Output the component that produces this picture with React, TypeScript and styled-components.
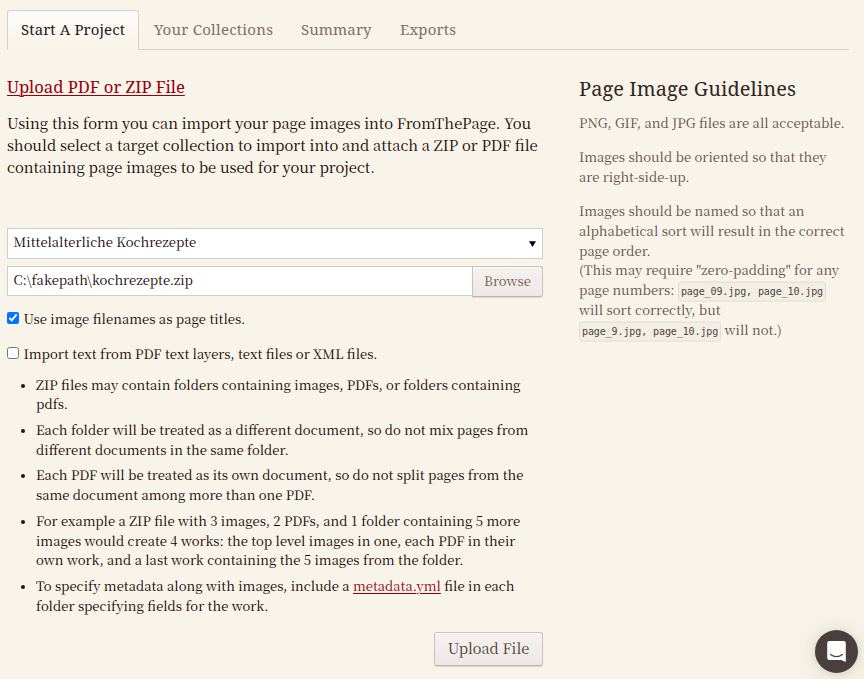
import React from "react";
import styled, { createGlobalStyle } from "styled-components";

const serif = '"Noto Serif CJK SC", "Source Serif Pro", "Liberation Serif", serif';
const slab = '"Noto Serif", "DejaVu Serif Condensed", "Liberation Serif", serif';

const GlobalStyle = createGlobalStyle`
  *, *::before, *::after { box-sizing: border-box; }
  html { background: #f9f4e9; }
  body {
    margin: 0;
    color: #140202;
    font: 400 13.15px/19.8px ${serif};
    overflow: hidden;
  }
`;

const Page = styled.div`
  height: 679px;
  padding: 10px 15px 0 7px;
`;

const Tabs = styled.nav`
  display: flex;
  height: 40px;
`;

const Tab = styled.a<{ $active?: boolean; $width: number; $spacing: number }>`
  width: ${(p) => p.$width}px;
  flex: none;
  padding-left: 15px;
  white-space: nowrap;
  font: 400 15px/38px ${slab};
  letter-spacing: ${(p) => p.$spacing}px;
  color: ${(p) => (p.$active ? "#271a1a" : "#7d706b")};
  border: 0 solid #d5d1c6;
  border-bottom-width: 1px;
  ${(p) =>
    p.$active &&
    `
    padding-left: 13px;
    line-height: 36px;
    border-width: 1px 1px 0;
    border-radius: 3px 3px 0 0;
    background: linear-gradient(#fefcf9, #f9f4e9);
  `}
`;

const TabRule = styled.div`
  flex: 1;
  border-bottom: 1px solid #d5d1c6;
`;

const Columns = styled.div`
  display: grid;
  grid-template-columns: 536px 1fr;
  column-gap: 36px;
`;

const Main = styled.main`
  padding-top: 25px;
`;

const UploadHeading = styled.h2`
  margin: 0;
  font: 400 16.7px/24px ${slab};
  letter-spacing: -0.05px;
`;

const Link = styled.a`
  color: #96000c;
  text-decoration: underline;
  text-underline-offset: 2px;
  text-decoration-thickness: 1px;
`;

const Intro = styled.p`
  margin: 13px 0 50px;
  font-size: 14.77px;
  line-height: 22px;
  white-space: nowrap;
`;

const SelectBox = styled.div`
  display: flex;
  align-items: center;
  justify-content: space-between;
  height: 31px;
  padding: 0 6px 3px 5.5px;
  background: #fff;
  border: 1px solid #d2cec4;
`;

const Caret = styled.svg`
  width: 7px;
  height: 6px;
  margin-top: 3px;
`;

const FileRow = styled.div`
  display: flex;
  margin-top: 7px;
  height: 32px;
`;

const FileName = styled.div`
  flex: 1;
  height: 30px;
  padding: 0 5.5px;
  line-height: 25px;
  background: #fff;
  border: 1px solid #d2cec4;
  border-right: 0;
`;

const Button = styled.button<{ $large?: boolean }>`
  width: ${(p) => (p.$large ? 109 : 71)}px;
  height: ${(p) => (p.$large ? 34 : 31)}px;
  padding: ${(p) => (p.$large ? "0 0 1px" : "0 0 3px")};
  font: 400 ${(p) => (p.$large ? "14.6px/30px" : "13.15px/25px")} ${serif};
  color: ${(p) => (p.$large ? "#4c3a36" : "#705850")};
  background: linear-gradient(#f5f1ee, #eee8e5);
  border: 1px solid #c9c3ba;
  border-bottom-color: #bcb5ad;
  border-radius: ${(p) => (p.$large ? "3px" : "0 3px 3px 0")};
  box-shadow: inset 0 1px #fbf9f7, 0 1px 1px rgba(70, 55, 40, 0.16);
`;

const CheckLabel = styled.label<{ $gap: number }>`
  display: flex;
  height: 20px;
  margin-top: ${(p) => p.$gap}px;
  white-space: nowrap;
  font-size: 13.2px;
`;

const Checkbox = styled.input`
  width: 12px;
  height: 12px;
  margin: 3px 4.5px 0 0;
  flex: none;
`;

const Notes = styled.ul`
  margin: 10.6px 0 0;
  padding-left: 29px;
  white-space: nowrap;
`;

const Note = styled.li`
  margin-bottom: 5.8px;
  &::marker { color: #271212; font-size: 11.5px; }
`;

const Actions = styled.div`
  display: flex;
  justify-content: flex-end;
  margin-top: 16px;
`;

const Sidebar = styled.aside`
  padding-top: 26px;
  color: #5f4f4b;
  white-space: nowrap;
`;

const SidebarHeading = styled.h3`
  margin: 0 0 10.8px;
  font: 400 20px/26px ${slab};
  letter-spacing: 0.06px;
  color: #342723;
`;

const Paragraph = styled.p`
  margin: 0 0 14.4px;
`;

const Code = styled.code`
  display: inline-block;
  height: 19.8px;
  padding: 0 2px;
  vertical-align: top;
  transform: translateY(1.6px);
  font: 400 10px/17.8px "DejaVu Sans Mono", "Liberation Mono", monospace;
  letter-spacing: -0.1px;
  color: #4d4441;
  background: #f3eee4;
  border: 1px solid #e2ddd2;
  border-radius: 3px;
`;

const ChatLauncher = styled.button`
  position: fixed;
  left: 815px;
  top: 630px;
  width: 43px;
  height: 43px;
  padding: 0;
  border: 0;
  border-radius: 50%;
  background: #49403d;
  box-shadow: 0 1px 6px rgba(60, 50, 30, 0.08), 0 2px 26px rgba(60, 50, 30, 0.16);
  svg { display: block; }
`;

export default function App() {
  return (
    <>
      <GlobalStyle />
      <Page>
        <Tabs>
          <Tab $active $width={132} $spacing={0.1}>Start A Project</Tab>
          <Tab $width={147} $spacing={0.25}>Your Collections</Tab>
          <Tab $width={99} $spacing={0.08}>Summary</Tab>
          <Tab $width={84} $spacing={0.17}>Exports</Tab>
          <TabRule />
        </Tabs>
        <Columns>
          <Main>
            <UploadHeading><Link>Upload PDF or ZIP File</Link></UploadHeading>
            <Intro>
              Using this form you can import your page images into FromThePage. You<br />
              should select a target collection to import into and attach a ZIP or PDF file<br />
              containing page images to be used for your project.
            </Intro>
            <SelectBox>
              Mittelalterliche Kochrezepte
              <Caret viewBox="0 0 7 6"><path d="M0 0.3h7L3.5 6z" fill="#000" /></Caret>
            </SelectBox>
            <FileRow>
              <FileName>C:\fakepath\kochrezepte.zip</FileName>
              <Button>Browse</Button>
            </FileRow>
            <CheckLabel $gap={11}>
              <Checkbox type="checkbox" defaultChecked />
              Use image filenames as page titles.
            </CheckLabel>
            <CheckLabel $gap={15}>
              <Checkbox type="checkbox" />
              Import text from PDF text layers, text files or XML files.
            </CheckLabel>
            <Notes>
              <Note>
                ZIP files may contain folders containing images, PDFs, or folders containing<br />
                pdfs.
              </Note>
              <Note>
                Each folder will be treated as a different document, so do not mix pages from<br />
                different documents in the same folder.
              </Note>
              <Note>
                Each PDF will be treated as its own document, so do not split pages from the<br />
                same document among more than one PDF.
              </Note>
              <Note>
                For example a ZIP file with 3 images, 2 PDFs, and 1 folder containing 5 more<br />
                images would create 4 works: the top level images in one, each PDF in their<br />
                own work, and a last work containing the 5 images from the folder.
              </Note>
              <Note>
                To specify metadata along with images, include a <Link>metadata.yml</Link> file in each<br />
                folder specifying fields for the work.
              </Note>
            </Notes>
            <Actions><Button $large>Upload File</Button></Actions>
          </Main>
          <Sidebar>
            <SidebarHeading>Page Image Guidelines</SidebarHeading>
            <Paragraph>PNG, GIF, and JPG files are all acceptable.</Paragraph>
            <Paragraph>
              Images should be oriented so that they<br />
              are right-side-up.
            </Paragraph>
            <Paragraph>
              Images should be named so that an<br />
              alphabetical sort will result in the correct<br />
              page order.<br />
              (This may require "zero-padding" for any<br />
              page numbers: <Code>page_09.jpg, page_10.jpg</Code><br />
              will sort correctly, but<br />
              <Code>page_9.jpg, page_10.jpg</Code> will not.)
            </Paragraph>
          </Sidebar>
        </Columns>
      </Page>
      <ChatLauncher aria-label="Open chat">
        <svg width="43" height="43" viewBox="0 0 43 43">
          <path d="M14.5 11h14a2.3 2.3 0 0 1 2.3 2.3V32l-4.6-2H14.5a2.3 2.3 0 0 1-2.3-2.3V13.3A2.3 2.3 0 0 1 14.5 11z" fill="#fff" />
          <path d="M15.5 24.5q6 4.300 12 0" fill="none" stroke="#49403d" strokeWidth="1.2" strokeLinecap="round" />
        </svg>
      </ChatLauncher>
    </>
  );
}
